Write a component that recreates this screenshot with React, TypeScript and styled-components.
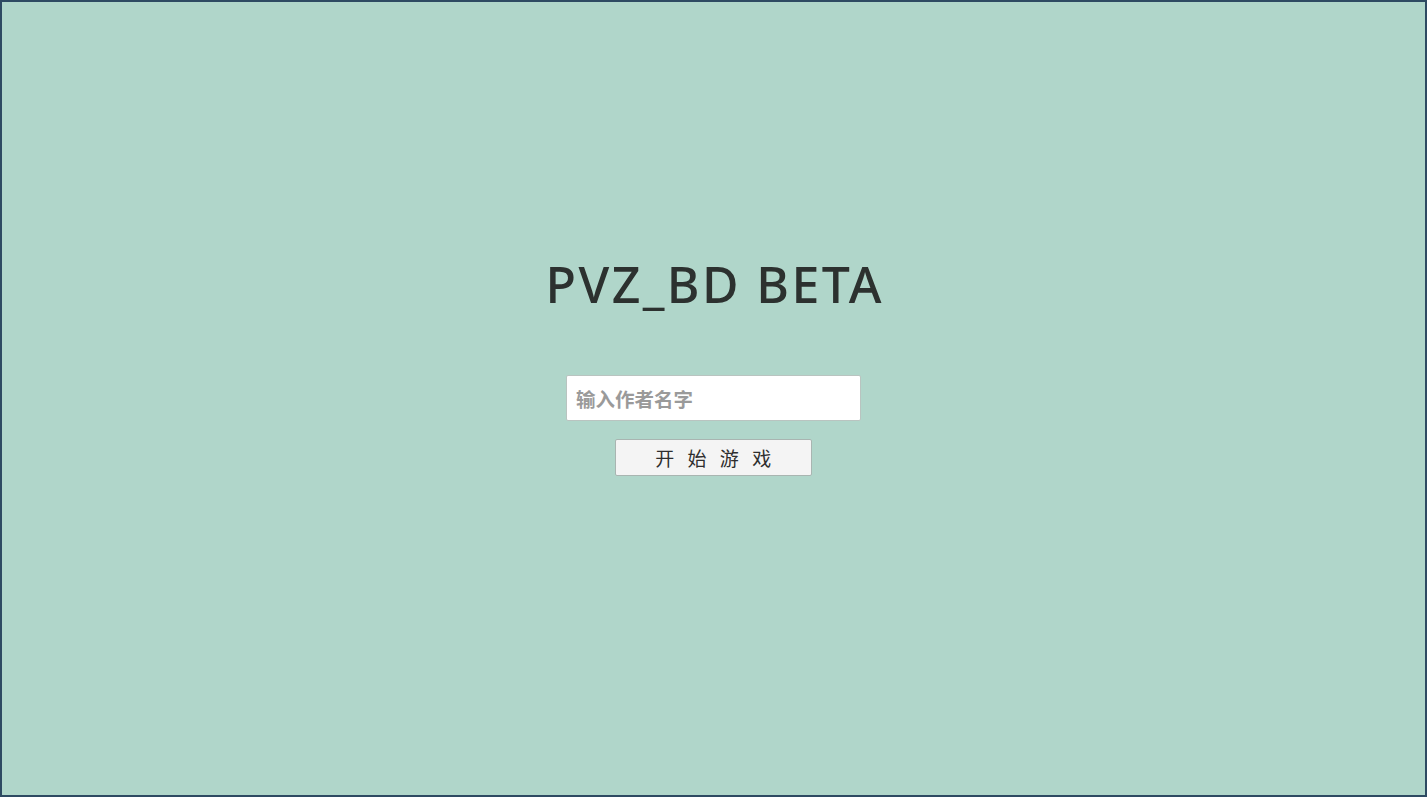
import styled, { createGlobalStyle } from 'styled-components';

const GlobalStyle = createGlobalStyle`
  html, body {
    margin: 0;
    padding: 0;
    height: 100%;
  }
  body {
    font-family: 'Noto Sans', 'Noto Sans CJK SC', sans-serif;
    background: #b0d6ca;
  }
`;

const App = () => {
  return (
    <Start.Page>
      <GlobalStyle />
      <Start.Title>PVZ_BD BETA</Start.Title>
      <Start.Form>
        <Start.Input placeholder='输入作者名字' />
        <Start.Button type='button'>开 始 游 戏</Start.Button>
      </Start.Form>
    </Start.Page>
  );
};

const Start = {
  Page: styled.div`
    box-sizing: border-box;
    width: 100vw;
    height: 100vh;
    border: 2px solid #2e4a62;
    background: #b0d6ca;
    display: flex;
    flex-direction: column;
    align-items: center;
    padding-top: 248px;
  `,
  Title: styled.h1`
    margin: 0;
    font-family: 'Noto Sans', 'Lato', sans-serif;
    font-size: 50px;
    line-height: 68px;
    font-weight: 500;
    letter-spacing: 2.4px;
    padding-left: 2.4px;
    color: #2c312f;
  `,
  Form: styled.div`
    display: flex;
    flex-direction: column;
    align-items: center;
    gap: 18px;
    margin-top: 57px;
  `,
  Input: styled.input`
    box-sizing: border-box;
    width: 295px;
    height: 46px;
    padding: 0 9px;
    border: 1px solid #b9c4c0;
    border-radius: 2px;
    background: #ffffff;
    font-family: 'Noto Sans CJK SC', sans-serif;
    font-size: 19.5px;
    font-weight: 700;
    color: #333;
    outline: none;
    &::placeholder {
      color: #9a9a9a;
    }
  `,
  Button: styled.button`
    box-sizing: border-box;
    width: 197px;
    height: 37px;
    border: 1px solid #a9b5b1;
    border-radius: 2px;
    background: #f4f4f4;
    font-family: 'Noto Sans CJK SC', sans-serif;
    font-size: 19px;
    color: #2e2e2e;
    letter-spacing: 4.5px;
    padding: 0 0 0 4px;
    cursor: pointer;
  `,
};

export default App;
